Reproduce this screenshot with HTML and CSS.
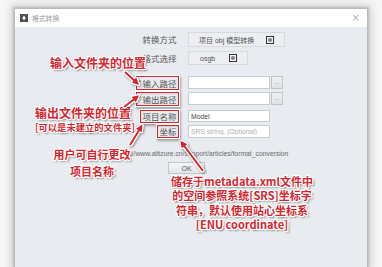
FILE: index.html
```html
<!DOCTYPE html>
<html lang="zh-CN">
<head>
<meta charset="utf-8">
<title>格式转换</title>
<link rel="stylesheet" href="styles.css">
</head>
<body>
<div class="dialog">
  <div class="titlebar">
    <span class="app-icon"><svg width="8" height="8" viewBox="0 0 8 8"><path d="M4 1.5 L5.6 4 L4 6.5 L2.4 4 Z" fill="#fff"/></svg></span>
    <span class="title">格式转换</span>
    <span class="close">×</span>
  </div>
  <div class="content">
    <div class="row r1">
      <div class="label"><span class="lbl">转换方式</span></div>
      <div class="combo wide"><span class="ctext">项目 obj 模型转换</span><svg class="dd" width="8" height="8" viewBox="0 0 8 8"><rect x="0.5" y="0.5" width="7" height="7" fill="#f4f5f6" stroke="#333"/><path d="M2.5 2.5 H5.5 V5.5 H2.5 Z" fill="#333"/><path d="M3 4 H5" stroke="#fff" stroke-width="0.8"/></svg></div>
    </div>
    <div class="row r2">
      <div class="label"><span class="lbl">格式选择</span></div>
      <div class="combo narrow"><span class="ctext">osgb</span><svg class="dd" width="8" height="8" viewBox="0 0 8 8"><rect x="0.5" y="0.5" width="7" height="7" fill="#f4f5f6" stroke="#333"/><path d="M2.5 2.5 H5.5 V5.5 H2.5 Z" fill="#333"/><path d="M3 4 H5" stroke="#fff" stroke-width="0.8"/></svg></div>
    </div>
    <div class="row r3">
      <div class="label"><span class="lbl boxed"><span class="star">*</span>输入路径</span></div>
      <div class="field"><input class="inp" type="text"><button class="browse">...</button></div>
    </div>
    <div class="row r4">
      <div class="label"><span class="lbl boxed"><span class="star">*</span>输出路径</span></div>
      <div class="field"><input class="inp" type="text"><button class="browse">...</button></div>
    </div>
    <div class="row r5">
      <div class="label"><span class="lbl boxed">项目名称</span></div>
      <div class="field"><input class="inp" type="text" value="Model"></div>
    </div>
    <div class="row r6">
      <div class="label"><span class="lbl boxed">坐标</span></div>
      <div class="field"><input class="inp" type="text" placeholder="SRS string. (Optional)"></div>
    </div>
    <p class="link">https://www.altizure.cn/support/articles/format_conversion</p>
    <button class="ok">OK</button>
  </div>
</div>

<div class="note n1">输入文件夹的位置</div>
<div class="note n2">输出文件夹的位置</div>
<div class="note n3">[可以是未建立的文件夹]</div>
<div class="note n4">用户可自行更改<br>项目名称</div>
<div class="note n5">储存于metadata.xml文件中<br>的空间参照系统[SRS]坐标字<br>符串，默认使用站心坐标系<br>[ENU coordinate]</div>

<svg class="arrows" width="382" height="267" viewBox="0 0 382 267">
  <defs>
    <marker id="ah" viewBox="0 0 10 10" refX="6" refY="5" markerWidth="7" markerHeight="7" orient="auto" markerUnits="userSpaceOnUse">
      <path d="M0 0 L10 5 L0 10 Z" fill="#d3262e"/>
    </marker>
  </defs>
  <g class="arrow-group" stroke="#d3262e" stroke-width="2" fill="none">
    <line x1="125" y1="72" x2="137" y2="83" marker-end="url(#ah)"/>
    <line x1="124" y1="107" x2="137" y2="97" marker-end="url(#ah)"/>
    <line x1="130" y1="145" x2="141" y2="127" marker-end="url(#ah)"/>
    <line x1="203" y1="171" x2="182" y2="143" marker-end="url(#ah)"/>
  </g>
</svg>
</body>
</html>
```

FILE: styles.css
```css
* {
  box-sizing: border-box;
}

html,
body {
  margin: 0;
  height: 100%;
}

body {
  background: #f7f7f7;
  padding: 9px 15px 0 15px;
  overflow: hidden;
  font-family: "Liberation Sans", "Noto Sans CJK SC", sans-serif;
}

.dialog {
  width: 352px;
  height: 258px;
  background: #e8ebef;
  box-shadow: 0 0 2px 2px rgba(0, 0, 0, 0.16), 0 0 8px 5px rgba(0, 0, 0, 0.13);
}

.titlebar {
  height: 18px;
  background: #ffffff;
  display: flex;
  align-items: center;
  padding: 0 7px 0 5px;
}

.app-icon {
  width: 8px;
  height: 8px;
  background: #505050;
  display: flex;
}

.title {
  margin-left: 4px;
  font-family: "Noto Sans CJK SC", sans-serif;
  font-size: 6.8px;
  color: #9a9a9a;
  line-height: 1;
}

.close {
  margin-left: auto;
  font-family: "DejaVu Sans", sans-serif;
  font-size: 10px;
  line-height: 1;
  color: #b0b0b0;
}

.content {
  padding-top: 5px;
}

.row {
  display: flex;
  align-items: center;
}

.r1 { height: 15px; }
.r2 { height: 14px; margin-top: 4px; }
.r3 { height: 13px; margin-top: 11px; }
.r4 { height: 13px; margin-top: 3px; }
.r5 { height: 12px; margin-top: 5px; }
.r6 { height: 13px; margin-top: 3px; }

.label {
  width: 164px;
  display: flex;
  justify-content: flex-end;
}

.lbl {
  font-family: "Noto Sans CJK SC", sans-serif;
  font-size: 8.5px;
  line-height: 9px;
  color: #555;
  padding: 1px 1.5px;
  border: 1.5px solid transparent;
  white-space: nowrap;
}

.lbl.boxed {
  border-color: #d3262e;
  box-shadow: 0 0 0 1px #ffffff, 1px 1.5px 2px 1px rgba(0, 0, 0, 0.3);
}

.star {
  font-size: 6px;
  vertical-align: 2px;
  margin-right: 1.5px;
}

.combo {
  margin-left: 9px;
  height: 100%;
  display: flex;
  align-items: center;
  background: #eceef1;
  border: 1px solid #d6d9dd;
  font-family: "Liberation Sans", "Noto Sans CJK SC", sans-serif;
  font-size: 7px;
  color: #555;
}

.combo.wide {
  width: 97px;
  padding-left: 10px;
}

.combo.wide .dd {
  margin-left: 12px;
}

.combo.narrow {
  width: 60px;
  padding-left: 11px;
}

.combo.narrow .dd {
  margin-left: 14px;
}

.ctext {
  white-space: nowrap;
}

.field {
  margin-left: 9px;
  height: 100%;
  display: flex;
  gap: 1px;
}

.inp {
  width: 82px;
  height: 100%;
  margin: 0;
  padding: 0 2px;
  border: 1px solid #c8cbcf;
  background: #ffffff;
  font-family: "Liberation Sans", sans-serif;
  font-size: 6.8px;
  color: #444;
  outline: none;
}

.inp::placeholder {
  color: #b0b0b0;
}

.browse {
  width: 12px;
  height: 100%;
  margin: 0;
  padding: 0;
  border: 1px solid #c0c3c7;
  background: linear-gradient(#eef0f2, #dfe2e5);
  font-family: "Liberation Sans", sans-serif;
  font-size: 5px;
  line-height: 1;
  color: #777;
}

.link {
  margin: 11px 0 0 100px;
  font-family: "Liberation Sans", sans-serif;
  font-size: 6.8px;
  line-height: 9px;
  color: #6a6a6a;
  white-space: nowrap;
}

.ok {
  display: block;
  margin: 4px 0 0 153px;
  width: 37px;
  height: 12px;
  padding: 0;
  border: 1px solid #c2c5c9;
  background: linear-gradient(#f6f7f8, #e3e5e8);
  font-family: "Liberation Sans", sans-serif;
  font-size: 7px;
  line-height: 1;
  color: #555;
}

.note {
  position: absolute;
  font-family: "Noto Sans CJK SC", sans-serif;
  font-weight: 700;
  color: #d3262e;
  line-height: 1;
  white-space: nowrap;
  text-shadow:
    1px 0 0 #fff, -1px 0 0 #fff, 0 1px 0 #fff, 0 -1px 0 #fff,
    1px 1px 0 #fff, -1px -1px 0 #fff, 1px -1px 0 #fff, -1px 1px 0 #fff,
    2px 2px 2px rgba(0, 0, 0, 0.45);
}

.n1 {
  left: 50px;
  top: 57px;
  font-size: 12px;
}

.n2 {
  left: 35px;
  top: 107px;
  font-size: 12px;
}

.n3 {
  left: 35px;
  top: 123px;
  font-size: 9.3px;
}

.n4 {
  left: 42px;
  top: 146px;
  width: 100px;
  text-align: center;
  font-size: 11px;
  line-height: 17px;
}

.n5 {
  left: 162px;
  top: 174px;
  width: 160px;
  text-align: center;
  font-size: 11px;
  line-height: 14.3px;
}

.arrows {
  position: absolute;
  left: 0;
  top: 0;
  pointer-events: none;
}

.arrow-group {
  filter: drop-shadow(1px 0 0 #fff) drop-shadow(-1px 0 0 #fff) drop-shadow(0 1px 0 #fff) drop-shadow(0 -1px 0 #fff) drop-shadow(1px 1px 1px rgba(0, 0, 0, 0.4));
}
```
